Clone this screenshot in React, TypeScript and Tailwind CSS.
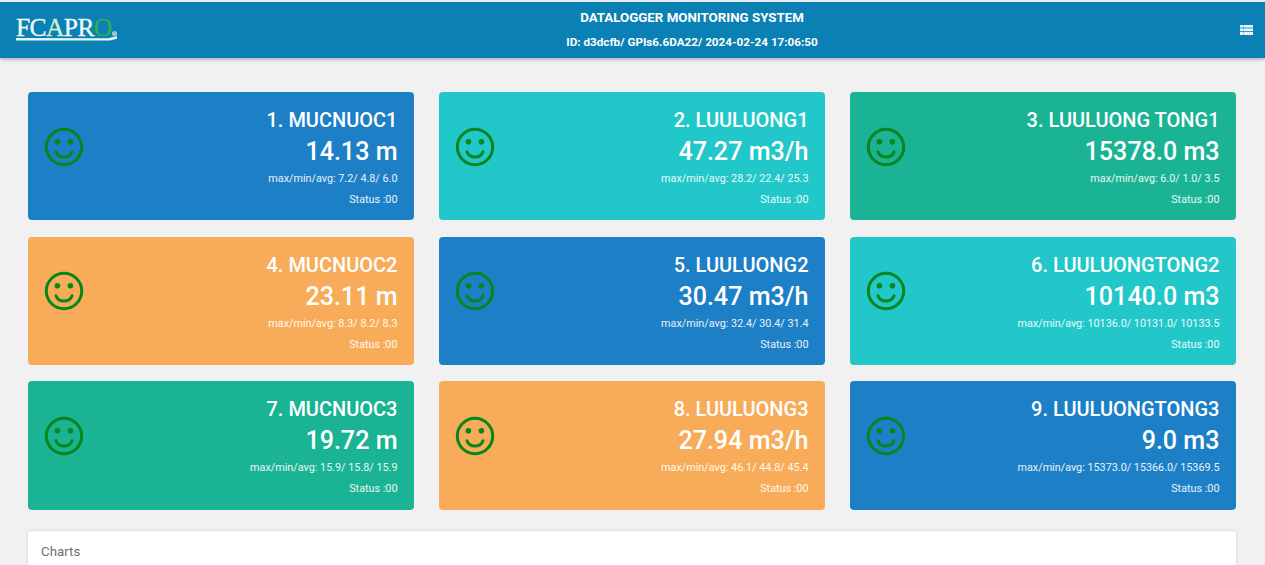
import React from "react";

const BLUE = "bg-[#1d7fc6]";
const CYAN = "bg-[#22c7c9]";
const GREEN = "bg-[#1ab394]";
const ORANGE = "bg-[#f8ac59]";

const cards = [
  { t: "1. MUCNUOC1", v: "14.13 m", s: "max/min/avg: 7.2/ 4.8/ 6.0", c: BLUE },
  { t: "2. LUULUONG1", v: "47.27 m3/h", s: "max/min/avg: 28.2/ 22.4/ 25.3", c: CYAN },
  { t: "3. LUULUONG TONG1", v: "15378.0 m3", s: "max/min/avg: 6.0/ 1.0/ 3.5", c: GREEN },
  { t: "4. MUCNUOC2", v: "23.11 m", s: "max/min/avg: 8.3/ 8.2/ 8.3", c: ORANGE },
  { t: "5. LUULUONG2", v: "30.47 m3/h", s: "max/min/avg: 32.4/ 30.4/ 31.4", c: BLUE },
  { t: "6. LUULUONGTONG2", v: "10140.0 m3", s: "max/min/avg: 10136.0/ 10131.0/ 10133.5", c: CYAN },
  { t: "7. MUCNUOC3", v: "19.72 m", s: "max/min/avg: 15.9/ 15.8/ 15.9", c: GREEN },
  { t: "8. LUULUONG3", v: "27.94 m3/h", s: "max/min/avg: 46.1/ 44.8/ 45.4", c: ORANGE },
  { t: "9. LUULUONGTONG3", v: "9.0 m3", s: "max/min/avg: 15373.0/ 15366.0/ 15369.5", c: BLUE },
];

function Smile() {
  return (
    <svg width="40" height="40" viewBox="0 0 40 40" fill="none" className="shrink-0 mb-[19px]">
      <circle cx="20" cy="20" r="17.7" stroke="#08851c" strokeWidth="3" />
      <circle cx="13.4" cy="14.7" r="2.8" fill="#08851c" />
      <circle cx="26.4" cy="14.7" r="2.8" fill="#08851c" />
      <path d="M12 24.7C14.5 31.8 25.5 31.8 28 24.7" stroke="#08851c" strokeWidth="3" strokeLinecap="round" />
    </svg>
  );
}

function ListIcon() {
  return (
    <svg width="13" height="10" viewBox="0 0 13 10" className="shrink-0">
      <rect width="13" height="10" fill="#e8f4f8" />
      <rect y="2.6" width="13" height="0.8" fill="#0a80b4" />
      <rect y="6.0" width="13" height="0.8" fill="#0a80b4" />
      <rect x="3" width="0.6" height="10" fill="#0a80b4" opacity="0.5" />
    </svg>
  );
}

function Logo() {
  return (
    <div className="relative w-[102px] h-[26px]">
      <div className="font-['Liberation_Serif',serif] text-[25.5px] leading-[22px] tracking-[-0.6px] text-[#eef9f9] [-webkit-text-stroke:0.35px_#eef9f9] whitespace-nowrap">
        FC<span className="text-[#cdeed3] [-webkit-text-stroke:0.35px_#cdeed3]">A</span>PR<span className="text-[#2fae52] [-webkit-text-stroke:0.35px_#2fae52]">O</span>
      </div>
      <svg width="102" height="26" viewBox="0 0 102 26" className="absolute left-0 top-0">
        <path d="M0 21L92 21.2L101 19L101 21.8L94 23.4L0 23.4Z" fill="#e6f6f6" />
        <circle cx="98.5" cy="16.5" r="2.6" fill="#9fc4d6" />
      </svg>
    </div>
  );
}

export default function App() {
  return (
    <div className="h-[565px] overflow-hidden bg-[#f1f1f1] font-['Roboto',sans-serif]">
      <header className="h-[58px] border-t-2 border-t-[#e4eef3] bg-[#0a80b4] shadow-[0_1px_4px_rgba(0,0,0,0.35)] flex items-center justify-between pl-4 pr-[12px] text-white">
        <Logo />
        <div className="text-center font-bold ml-[26px] -mt-[1px]">
          <div className="text-[13.3px] leading-[24px] whitespace-nowrap">DATALOGGER MONITORING SYSTEM</div>
          <div className="text-[11.7px] leading-[24px] whitespace-nowrap">ID: d3dcfb/ GPIs6.6DA22/ 2024-02-24 17:06:50</div>
        </div>
        <ListIcon />
      </header>
      <main className="pl-[28px] pr-[29px] pt-[34px]">
        <div className="grid grid-cols-3 gap-x-[25px] gap-y-[16.2px]">
          {cards.map((c) => (
            <div key={c.t} className={`${c.c} h-[128.4px] rounded-[4px] flex items-center justify-between pl-[16px] pr-[16.5px] text-white`}>
              <Smile />
              <div className="text-right pt-[4px]">
                <div className="text-[20px] font-medium leading-[24px] mb-[4px]">{c.t}</div>
                <div className="text-[25.1px] font-medium leading-[31px] mb-[3px]">{c.v}</div>
                <div className="text-[10.8px] leading-[17px] mb-[4px] text-white/90">{c.s}</div>
                <div className="text-[10.8px] leading-[17px] text-white/90">Status :00</div>
              </div>
            </div>
          ))}
        </div>
        <div className="mt-[21.4px] h-[80px] rounded-t-[2px] bg-white shadow-[0_0_3px_rgba(0,0,0,0.15)] pl-[13px] pt-[13px] text-[13.3px] leading-[16px] text-[#6f6f6f]">
          Charts
        </div>
      </main>
    </div>
  );
}
